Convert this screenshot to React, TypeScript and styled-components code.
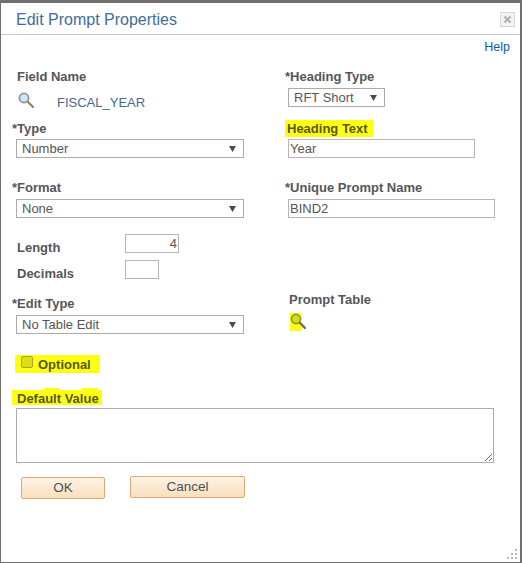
import React from "react"
import styled, { createGlobalStyle } from "styled-components"

const GlobalStyle = createGlobalStyle`
  html, body {
    margin: 0;
    padding: 0;
    background: #fff;
  }
  body {
    font-family: "Liberation Sans", Arial, sans-serif;
    font-size: 13px;
    color: #4d4d4d;
  }
`

const Dialog = styled.div`
  position: relative;
  box-sizing: border-box;
  width: 522px;
  height: 563px;
  background: #fff;
  border-style: solid;
  border-color: #6f6f6f;
  border-width: 3px 2px 1px 1px;
`

const Header = styled.header`
  display: flex;
  align-items: center;
  justify-content: space-between;
  box-sizing: border-box;
  height: 32px;
  padding: 0 5px 0 15px;
  border-bottom: 1px solid #c2ccd4;
`

const Title = styled.h1`
  margin: 0;
  padding-top: 2px;
  font-size: 16px;
  font-weight: 400;
  color: #3f6d9c;
`

const CloseButton = styled.button`
  display: flex;
  align-items: center;
  justify-content: center;
  box-sizing: border-box;
  width: 15px;
  height: 15px;
  padding: 0;
  margin-top: 1px;
  background: #f3f3f3;
  border: 1px solid #d8d8d8;
`

const HelpRow = styled.div`
  display: flex;
  justify-content: flex-end;
  padding: 5px 10px 0 0;
  line-height: 15px;
`

const HelpLink = styled.a`
  font-size: 12.5px;
  color: #0f5aa6;
`

const Form = styled.div`
  display: flex;
  flex-direction: column;
  padding-left: 11px;
`

const Row = styled.div<{ $top: number; $height: number }>`
  display: grid;
  grid-template-columns: 273px 1fr;
  margin-top: ${(p) => p.$top}px;
  height: ${(p) => p.$height}px;
`

const Cell = styled.div`
  display: flex;
  flex-direction: column;
  align-items: flex-start;
`

const Label = styled.label<{ $indent?: number; $gap?: number; $lift?: number }>`
  display: block;
  font-weight: 700;
  line-height: 16px;
  color: #55565a;
  margin-top: ${(p) => -(p.$lift ?? 0)}px;
  margin-left: ${(p) => p.$indent ?? 0}px;
  margin-bottom: ${(p) => p.$gap ?? 0}px;
`

const Marked = styled.span`
  display: inline-block;
  background: #ffff14;
  color: #58580c;
  padding: 0 5px 0 2px;
  line-height: 17px;
`

const FieldValue = styled.div`
  display: flex;
  align-items: flex-start;
  margin: 7px 0 0 6px;
`

const FieldText = styled.span`
  margin: 3px 0 0 23px;
  line-height: 15px;
  color: #47698c;
`

const Select = styled.div<{ $width: number; $left?: number }>`
  display: flex;
  align-items: center;
  justify-content: space-between;
  box-sizing: border-box;
  width: ${(p) => p.$width}px;
  height: 19px;
  margin-left: ${(p) => p.$left ?? 4}px;
  padding: 0 7px 0 5px;
  background: #fff;
  border: 1px solid #ababab;
  color: #555;
`

const Arrow = () => (
  <svg width="7" height="6" viewBox="0 0 7 6">
    <path d="M0 0H7L3.5 6Z" fill="#4a4a4a" />
  </svg>
)

const TextInput = styled.input<{ $width: number; $right?: boolean; $left?: number }>`
  box-sizing: border-box;
  display: block;
  width: ${(p) => p.$width}px;
  height: 19px;
  margin: 0 0 0 ${(p) => p.$left ?? 3}px;
  padding: 0 1px;
  border: 1px solid #b5b5b5;
  border-radius: 0;
  outline: none;
  font: 13px "Liberation Sans", Arial, sans-serif;
  color: #555;
  text-align: ${(p) => (p.$right ? "right" : "left")};
`

const InlineField = styled.div<{ $top: number }>`
  display: flex;
  align-items: flex-end;
  width: 272px;
  margin-top: ${(p) => p.$top}px;
`

const InlineLabel = styled(Label)`
  width: 108px;
  margin-left: 5px;
  margin-bottom: -3px;
`

const CheckRow = styled.div`
  display: flex;
  align-items: flex-start;
  box-sizing: border-box;
  width: 85px;
  height: 18px;
  margin: 19px 0 0 3px;
  padding-left: 6px;
  background: #ffff14;
`

const CheckBox = styled.span`
  box-sizing: border-box;
  width: 12px;
  height: 12px;
  margin-top: 1px;
  background: #dede10;
  border: 1px solid #a5a53a;
  border-radius: 2px;
`

const CheckLabel = styled.span`
  margin: 2px 0 0 5px;
  font-weight: 700;
  line-height: 16px;
  color: #58580c;
`

const DefaultLabel = styled.div`
  position: relative;
  align-self: flex-start;
  margin: 17px 0 0 0;
  padding: 0 4px 0 5px;
  width: 81px;
  height: 15px;
  line-height: 17px;
  font-weight: 700;
  white-space: nowrap;
  background: #ffff14;
  color: #58580c;

  /* the marker strokes stick out above the label */
  &::before,
  &::after {
    content: "";
    position: absolute;
    top: -2px;
    height: 2px;
    background: #ffff14;
  }
  &::before {
    left: 32px;
    width: 16px;
  }
  &::after {
    left: 70px;
    width: 16px;
  }
`

const TextArea = styled.textarea`
  display: block;
  box-sizing: border-box;
  width: 478px;
  height: 55px;
  margin: 3px 0 0 4px;
  padding: 2px;
  border: 1px solid #ababab;
  border-radius: 0;
  outline: none;
  font: 13px "Liberation Sans", Arial, sans-serif;
`

const Buttons = styled.div`
  display: flex;
  align-items: flex-start;
  margin: 13px 0 0 9px;
`

const Button = styled.button<{ $width: number; $left?: number; $top?: number }>`
  box-sizing: border-box;
  width: ${(p) => p.$width}px;
  height: 22px;
  margin-left: ${(p) => p.$left ?? 0}px;
  margin-top: ${(p) => p.$top ?? 0}px;
  padding: 0 0 1px;
  background: linear-gradient(#fdf3e4, #f9dfbd);
  border: 1px solid #e0a873;
  border-radius: 2px;
  font: 13.5px "Liberation Sans", Arial, sans-serif;
  color: #47505c;
`

const Grip = styled.svg`
  position: absolute;
  right: 2px;
  bottom: 2px;
`

const Magnifier = ({ marked }: { marked?: boolean }) => (
  <svg width="16" height="17" viewBox="0 0 16 17">
    <circle
      cx="6"
      cy="6"
      r="4.6"
      fill={marked ? "#d2dc1e" : "#cfe6f7"}
      stroke={marked ? "#8f9a20" : "#8c949c"}
      strokeWidth="1.7"
    />
    <path
      d="M9.8 9.8L15 15"
      stroke={marked ? "#6c6c2c" : "#8a8a5a"}
      strokeWidth="2.2"
      strokeLinecap="round"
    />
  </svg>
)

const PromptIcon = styled.span`
  display: block;
  width: 11px;
  height: 18px;
  margin: 5px 0 0 5px;
  background: #ffff14;
`

const App = () => {
  return (
    <Dialog>
      <GlobalStyle />
      <Header>
        <Title>Edit Prompt Properties</Title>
        <CloseButton aria-label="Close">
          <svg width="9" height="9" viewBox="0 0 9 9">
            <path d="M1.5 1.5L7.5 7.5M7.5 1.5L1.5 7.5" stroke="#a9b4bd" strokeWidth="2.2" />
          </svg>
        </CloseButton>
      </Header>
      <HelpRow>
        <HelpLink>Help</HelpLink>
      </HelpRow>
      <Form>
        <Row $top={14} $height={40}>
          <Cell>
            <Label $indent={5}>Field Name</Label>
            <FieldValue>
              <Magnifier />
              <FieldText>FISCAL_YEAR</FieldText>
            </FieldValue>
          </Cell>
          <Cell>
            <Label $gap={3}>*Heading Type</Label>
            <Select $width={97} $left={3}>
              RFT Short
              <Arrow />
            </Select>
          </Cell>
        </Row>
        <Row $top={12} $height={39}>
          <Cell>
            <Label $gap={2}>*Type</Label>
            <Select $width={228}>
              Number
              <Arrow />
            </Select>
          </Cell>
          <Cell>
            <Label $gap={2} $lift={1}>
              <Marked>Heading Text</Marked>
            </Label>
            <TextInput readOnly defaultValue="Year" $width={187} />
          </Cell>
        </Row>
        <Row $top={20} $height={40}>
          <Cell>
            <Label $gap={3}>*Format</Label>
            <Select $width={228}>
              None
              <Arrow />
            </Select>
          </Cell>
          <Cell>
            <Label $gap={3}>*Unique Prompt Name</Label>
            <TextInput readOnly defaultValue="BIND2" $width={207} />
          </Cell>
        </Row>
        <InlineField $top={14}>
          <InlineLabel>Length</InlineLabel>
          <TextInput readOnly defaultValue="4" $width={54} $right $left={0} />
        </InlineField>
        <InlineField $top={7}>
          <InlineLabel>Decimals</InlineLabel>
          <TextInput readOnly $width={34} $left={0} />
        </InlineField>
        <Row $top={17} $height={40}>
          <Cell>
            <Label $gap={3}>*Edit Type</Label>
            <Select $width={228}>
              No Table Edit
              <Arrow />
            </Select>
          </Cell>
          <Cell>
            <Label $indent={4} $lift={4}>Prompt Table</Label>
            <PromptIcon>
              <Magnifier marked />
            </PromptIcon>
          </Cell>
        </Row>
        <CheckRow>
          <CheckBox />
          <CheckLabel>Optional</CheckLabel>
        </CheckRow>
        <DefaultLabel>Default Value</DefaultLabel>
        <TextArea readOnly />
        <Buttons>
          <Button $width={84} $top={1}>OK</Button>
          <Button $width={115} $left={25}>Cancel</Button>
        </Buttons>
      </Form>
      <Grip width="12" height="12" viewBox="0 0 12 12">
        <path
          d="M9 1h2v2H9zM5 5h2v2H5zM9 5h2v2H9zM1 9h2v2H1zM5 9h2v2H5zM9 9h2v2H9z"
          fill="#b8b8b8"
        />
      </Grip>
    </Dialog>
  )
}

export default App
